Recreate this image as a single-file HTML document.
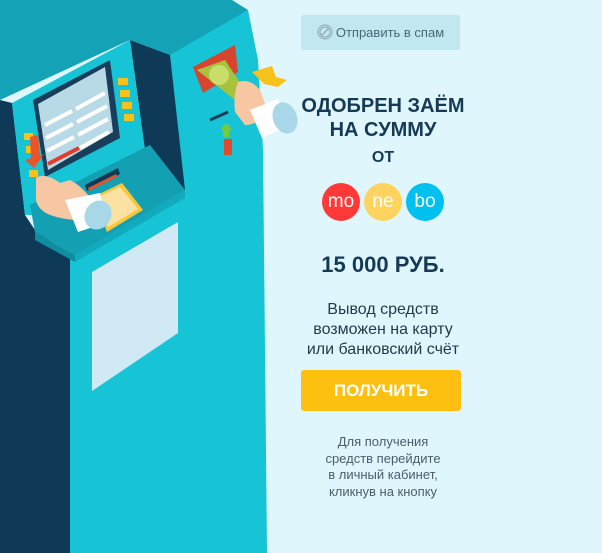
<!DOCTYPE html>
<html><head><meta charset="utf-8"><style>
body{margin:0;width:602px;height:553px;background:#dff6fd;font-family:"Liberation Sans",sans-serif;position:relative;overflow:hidden}
.t{position:absolute;left:300px;width:166px;text-align:center}
</style></head><body>
<svg width="602" height="553" style="position:absolute;left:0;top:0">
<polygon points="160,55 248,10 258,60 263,150 267,553 70,553 70,255" fill="#16c4d6"/>
<polygon points="0,0 232,0 248,10 170,55 130,40 0,100" fill="#14a3b6"/>
<polygon points="0,100 12,103 25,215 35,230 70,255 70,553 0,553" fill="#0e3957"/>
<polygon points="130,40 170,55 185,190 145,150" fill="#0e3957"/>
<polygon points="12,103 130,40 145,150 150,145 35,215 25,215" fill="#16c4d6"/>
<polygon points="30,205 150,145 185,190 75,255 35,232" fill="#13a0b3"/>
<polygon points="35,232 75,255 75,262 35,240" fill="#0f8ea0"/>
<polygon points="75,255 185,190 185,198 75,262" fill="#12aabd"/>
<polygon points="85,185 118,168 120,174 87,191" fill="#0e3957"/>
<polygon points="88,188 116,174 117,177 89,191" fill="#e0542c"/>
<polygon points="33,100 110,60 120,138 45,177" fill="#1a3d5a"/>
<polygon points="38,104 105,67 113,132 48,170" fill="#b7dae6"/>
<g stroke="#fff" stroke-width="4">
<line x1="45" y1="125" x2="72" y2="111"/><line x1="76" y1="109" x2="105" y2="93"/>
<line x1="46" y1="138" x2="73" y2="124"/><line x1="77" y1="122" x2="107" y2="106"/>
<line x1="47" y1="151" x2="74" y2="137"/><line x1="78" y1="135" x2="108" y2="119"/>
<line x1="80" y1="148" x2="109" y2="132"/>
</g>
<line x1="48" y1="164" x2="79" y2="148" stroke="#e33a2c" stroke-width="4"/>
<g fill="#f7c21b"><rect x="118" y="78" width="10" height="7"/><rect x="120" y="90" width="10" height="7"/><rect x="122" y="102" width="10" height="7"/><rect x="124" y="114" width="10" height="7"/>
<rect x="24" y="133" width="9" height="7"/><rect x="26" y="146" width="9" height="7"/><rect x="29" y="170" width="9" height="7"/></g>
<polygon points="30,137 38,135 40,156 44,154 34,168 25,160 31,158" fill="#e8552a"/>
<polygon points="93,197 122,183 143,210 107,232" fill="#f9c83a"/>
<polygon points="96,198 120,187 138,209 108,227" fill="#fbe2a2"/>
<path d="M36,178 Q45,172 60,183 L70,180 Q80,185 88,195 L95,220 Q70,222 50,215 Q38,210 36,200 Z" fill="#f7c6a3"/>
<polygon points="65,200 100,193 108,222 78,232" fill="#fff"/>
<ellipse cx="98" cy="215" rx="13" ry="15" fill="#a8d8e8" transform="rotate(30 98 215)"/>
<polygon points="193,67 235,45 238,72 203,93" fill="#d8442c"/>
<polygon points="197,70 225,60 245,90 235,100" fill="#a7c33d"/>
<circle cx="219" cy="75" r="10" fill="#c7de6a"/>
<path d="M238,82 Q250,78 260,90 L268,112 Q258,125 245,125 L235,112 Q233,95 238,82Z" fill="#f7c6a3"/>
<polygon points="250,110 278,99 290,125 262,138" fill="#fff"/>
<ellipse cx="285" cy="118" rx="12" ry="16" fill="#a8d8e8" transform="rotate(-20 285 118)"/>
<polygon points="252,72 272,66 276,77 287,80 278,87 264,84" fill="#f7c21b"/>
<line x1="210" y1="120" x2="228" y2="112" stroke="#1a3d5a" stroke-width="3"/>
<polygon points="226,123 232,130 229,130 229,137 223,137 223,130 220,130" fill="#7acb3c"/>
<rect x="224" y="139" width="8" height="16" fill="#e04a2f"/>
<polygon points="92,272 178,222 178,333 92,391" fill="#d1e9f4"/>
</svg>
<div class="t" style="top:15px;left:301px;width:159px;height:35px;background:#c1e8f1;border-radius:2px;font-size:13px;color:#4a6878;line-height:35px;">
<svg width="16" height="16" style="vertical-align:-3px;margin-right:3px"><circle cx="8" cy="8" r="7" fill="none" stroke="#8aa4b0" stroke-width="1"/><circle cx="8" cy="8" r="5" fill="none" stroke="#8aa4b0" stroke-width="1"/><line x1="4" y1="12" x2="12" y2="4" stroke="#8aa4b0" stroke-width="1.2"/></svg>Отправить в спам</div>
<div class="t" style="top:94px;left:283px;width:200px;font-size:20px;font-weight:bold;color:#163a55;line-height:24px">ОДОБРЕН ЗАЁМ<br>НА СУММУ</div>
<div class="t" style="top:149px;left:283px;width:200px;font-size:16px;font-weight:bold;color:#163a55">ОТ</div>
<div style="position:absolute;top:183px;left:322px;width:38px;height:38px;border-radius:50%;background:#ff3838;color:#fff;font-size:19px;line-height:37px;text-align:center">mo</div>
<div style="position:absolute;top:183px;left:364px;width:38px;height:38px;border-radius:50%;background:#ffd35f;color:#fff;font-size:19px;line-height:37px;text-align:center">ne</div>
<div style="position:absolute;top:183px;left:406px;width:38px;height:38px;border-radius:50%;background:#00c0f0;color:#fff;font-size:19px;line-height:37px;text-align:center">bo</div>
<div class="t" style="top:252px;left:283px;width:200px;font-size:22px;font-weight:bold;color:#163a55">15 000 РУБ.</div>
<div class="t" style="top:300px;left:283px;width:200px;font-size:16px;color:#263a4a;line-height:20px">Вывод средств<br>возможен на карту<br>или банковский счёт</div>
<div class="t" style="top:370px;left:301px;width:160px;height:41px;background:#fdc010;border-radius:3px;color:#fff;font-weight:bold;font-size:17px;line-height:41px">ПОЛУЧИТЬ</div>
<div class="t" style="top:434px;left:283px;width:200px;font-size:13px;color:#4b5d6b;line-height:16.5px">Для получения<br>средств перейдите<br>в личный кабинет,<br>кликнув на кнопку</div>
</body></html>
